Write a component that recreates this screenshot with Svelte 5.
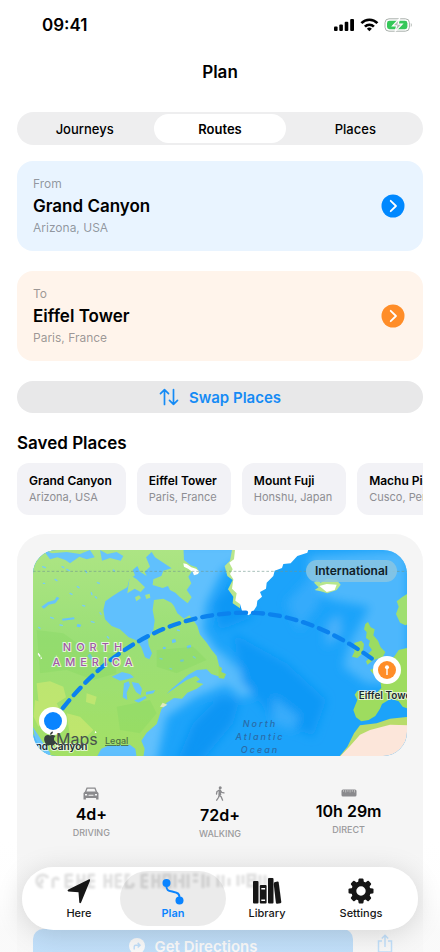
<script lang="ts">
  interface Place {
    name: string;
    region: string;
  }

  const segments = ['Journeys', 'Routes', 'Places'];
  const tabs = ['Here', 'Plan', 'Library', 'Settings'];

  const saved: Place[] = [
    { name: 'Grand Canyon', region: 'Arizona, USA' },
    { name: 'Eiffel Tower', region: 'Paris, France' },
    { name: 'Mount Fuji', region: 'Honshu, Japan' },
    { name: 'Machu Picchu', region: 'Cusco, Peru' }
  ];

  const stats = [
    { icon: 'car', value: '4d+', label: 'DRIVING' },
    { icon: 'walk', value: '72d+', label: 'WALKING' },
    { icon: 'ruler', value: '10h 29m', label: 'DIRECT' }
  ];

  let segment = $state('Routes');
  let tab = $state('Plan');
  let from = $state(saved[0]);
  let to = $state(saved[1]);

  function swap() {
    [from, to] = [to, from];
  }
</script>

{#snippet chevron()}
  <svg class="chevron" viewBox="0 0 24 24" aria-hidden="true">
    <circle cx="12" cy="12" r="11.5" fill="currentColor" />
    <path d="M9.7 6.8 15 12l-5.3 5.2" fill="none" stroke="#fff" stroke-width="1.8" stroke-linecap="round" stroke-linejoin="round" />
  </svg>
{/snippet}

<div class="screen">
  <main>
    <div class="status">
      <span class="time">09:41</span>
      <svg width="80" height="16" viewBox="0 0 80 16" aria-hidden="true">
        <rect x="0" y="9.5" width="3.6" height="4.5" rx="1" />
        <rect x="5.3" y="7.5" width="3.6" height="6.5" rx="1" />
        <rect x="10.7" y="4.8" width="3.6" height="9.2" rx="1" />
        <rect x="16.2" y="2" width="3.8" height="12" rx="1" />
        <g fill="none" stroke="#000" stroke-width="2.6">
          <path d="M27.4 6.2a11 11 0 0 1 16 0" />
          <path d="M30.9 9.6a6.3 6.3 0 0 1 9 0" />
        </g>
        <path d="M35.4 14.2 32.9 11.7a3.6 3.6 0 0 1 5 0z" />
        <rect x="51" y="1.8" width="24.4" height="12.4" rx="4" fill="#fff" stroke="#a9b0ab" />
        <rect x="53" y="3.8" width="20.4" height="8.4" rx="2.4" fill="#35c759" />
        <path d="M76.8 6v4c1.3-.5 1.3-3.5 0-4z" fill="#a9b0ab" />
        <path d="m65.6 1.500-7 7.300h4.100l-1.700 5.900 7.200-7.500h-4.100z" fill="#b4bbb6" stroke="#fff" stroke-width="1.2" />
      </svg>
    </div>

    <h1>Plan</h1>

    <div class="segments" role="group" aria-label="Plan section">
      {#each segments as name}
        <button type="button" class:active={segment === name} aria-pressed={segment === name} onclick={() => (segment = name)}>
          {name}
        </button>
      {/each}
    </div>

    <div class="stack">
      <button type="button" class="place from">
        <span class="place-text">
          <span class="hint">From</span>
          <span class="name">{from.name}</span>
          <span class="hint">{from.region}</span>
        </span>
        {@render chevron()}
      </button>

      <button type="button" class="place to">
        <span class="place-text">
          <span class="hint">To</span>
          <span class="name">{to.name}</span>
          <span class="hint">{to.region}</span>
        </span>
        {@render chevron()}
      </button>

      <button type="button" class="swap" onclick={swap}>
        <svg width="20" height="18" viewBox="0 0 20 18" aria-hidden="true">
          <path d="M5.5 16.5V1.700M1.500 5.700l4-4 4 4M14.500 1.500v14.800M10.500 12.300l4 4 4-4" />
        </svg>
        Swap Places
      </button>
    </div>

    <h2>Saved Places</h2>
    <div class="chips">
      {#each saved as place}
        <button type="button" class="chip">
          <strong>{place.name}</strong>
          <span>{place.region}</span>
        </button>
      {/each}
    </div>

    <section class="route">
      <div class="map">
        <svg viewBox="0 0 374 206" preserveAspectRatio="xMidYMid slice" role="img" aria-label="Route map">
          <defs>
            <filter id="soft" x="-20%" y="-20%" width="140%" height="140%"><feGaussianBlur stdDeviation="14" /></filter>
            <filter id="shore"><feGaussianBlur stdDeviation="1.5" /></filter>
            <linearGradient id="land" x1="0" y1="0" x2="0" y2="1">
              <stop offset="0" stop-color="#ade584" />
              <stop offset="0.45" stop-color="#9bdf76" />
              <stop offset="1" stop-color="#a3e065" />
            </linearGradient>
          </defs>

          <!-- terrain is drawn on a grid three times finer than the labels -->
          <svg width="374" height="206" viewBox="0 0 1122 618">
            <rect width="1122" height="618" fill="#1ca3fa" />
            <g filter="url(#soft)">
              <path d="M440-20H640V20L570 60 520 160 510 240 570 330 640 390 670 430 620 440 590 400 490 440 400 500 370 640H0V-20z" fill="#60c0fd" />
              <path d="M830 20 1122 0 1122 400 1000 400 930 350 950 280 1010 170 900 150 830 120z" fill="#4db7fc" />
              <path d="M560 300 610 350 655 390 620 430 560 400z" fill="#58bcfc" />
              <path d="M600 250 760 340 880 450 840 560 720 500 630 400z" fill="#0c98f6" />
              <path d="M560 440 620 450 600 520 500 640 430 640 480 520z" fill="#0d95f4" />
              <path d="M600 100 660 200 560 240 540 160z" fill="#1097f5" />
              <path d="M880 220 920 190 930 250 880 290z" fill="#48b0fa" />
              <path d="M720 440 800 500 780 540 720 520z" fill="#39acfb" />
              <path d="M850 60 760 160 800 240 860 160z" fill="#35abfb" />
            </g>

            <g filter="url(#shore)">
              <g transform="translate(-39 -30)">
                <path d="M30 20H490L492 60 512 76 530 82 538 98 526 104 516 94 505 110 514 130 500 150 515 172 503 190 480 172 466 158 450 150 444 138 428 144 398 135 400 118 424 108 430 92 455 85 430 68 405 52 395 36 378 52 390 80 374 95 380 108 360 95 352 78 338 90 345 106 328 118 322 142 298 155 278 168 256 184 250 210 255 238 275 258 300 268 326 292 352 302 364 322 375 352 388 358 396 340 386 316 384 298 400 270 404 242 398 210 402 180 430 176 454 188 462 198 472 220 492 236 508 226 518 238 532 258 540 284 560 308 575 330 590 348 598 380 600 410 574 402 560 388 530 390 505 404 482 424 455 446 440 462 470 440 500 420 528 408 540 418 528 426 550 432 530 446 502 458 486 476 462 474 440 488 424 508 416 534 410 552 380 578 364 602 374 626 370 652 350 652 346 626 330 614 300 616 270 614 244 626 230 652H74L52 600 30 570z" fill="url(#land)" />
                <path d="M420 500 428 488 442 494 430 502z" fill="#dfe9c0" />
                <path d="M330 105 350 118 375 142 362 156 344 146 322 160z" fill="#a9e382" />
                <path d="M345 172l12-6 6 8-14 10zM375 165l14-4 2 12-12 4z" fill="#a9e382" />
                <g fill="#68c4fb">
                  <path d="M70 30 96 40 140 36 180 42 210 30 224 52 200 58 178 50 150 70 136 60 112 52 90 58z" />
                  <path d="M240 30 262 42 290 36 310 48 302 62 270 54 246 62z" />
                  <path d="M64 200 84 186 104 180 110 170 118 174 106 190 86 194 72 206z" />
                  <path d="M275 410 306 396 330 402 342 412 322 418 300 422z" />
                  <path d="M312 430 326 424 330 436 320 458 322 480 308 472z" />
                  <path d="M335 426 356 430 366 446 362 466 348 456 340 440z" />
                  <path d="M342 482 376 468 380 474 356 488zM378 456l28-6-6 10-22 4z" />
                  <path d="M38 560 54 584 70 610 92 640 84 652 64 628 46 596z" />
                  <path d="M126 236l36-4 2 6-36 4zM172 252l12 2-4 8-10-2zM210 340l10 14-8 6-10-12zM188 310l8 2-2 8-8-4z" />
                  <path d="M455 300l10-4 4 10-12 4zM500 318l12-4 2 8-12 4zM430 320l8 2-2 6-8-2zM480 360l10-2 2 6-10 2z" />
                </g>
                <g fill="none" stroke="#78cdf5" stroke-width="4" stroke-linecap="round">
                  <path d="M70 130h4M105 118l6 4M140 88l8 4M172 140l5 3M196 92l4 6M232 128l6 2M214 158l2 6M150 160l6 3M92 232l8 3M188 196l6 2M226 170l4 4M120 255l7 1M56 262l4 3M214 245l8 2M262 290l4 4M240 218l3 5M472 270l6 2M420 355l6 2M520 350l6 4M450 385l5 2M126 80l5 3M280 90l4 4M68 80l8 3" />
                </g>
                <g fill="#d3ea72" opacity="0.6">
                  <path d="M50 430 90 424 130 440 138 472 110 490 130 530 100 560 60 530z" />
                  <path d="M140 520 180 530 220 570 190 600 150 590zM200 460l30 10-6 24-26-8z" />
                  <path d="M45 480l26 10 4 50-20 20-14-30z" />
                </g>
                <g fill="#82d75f" opacity="0.3">
                  <path d="M50 270 130 280 200 330 280 340 290 400 220 420 140 390 60 400z" />
                  <path d="M290 500 390 480 410 520 360 580 300 570z" />
                  <path d="M410 330 520 320 560 360 470 400 410 380z" />
                </g>
                <g fill="#fff">
                  <path d="M490 70l10 2 14 10 14 4 10 8-4 8-12 4-4-10-14-10-12-6z" />
                  <path d="M55 338l6 8-2 6-6-10zM62 346l4 10-4 2zM226 572l4 6-6 2z" />
                </g>
              </g>

              <g transform="translate(561 -30)">
                <path d="M38 20H60L50 100 60 150 60 205 38 190 40 170 24 148 38 120 22 108 14 78 30 62z" fill="#b9e58c" />
                <path d="M46 20H268L262 38 232 48 212 70 190 72 186 84 164 92 160 108 140 128 138 146 120 156 126 170 112 182 110 198 100 214 86 226 66 212 60 192 46 182 50 160 36 146 40 118 30 102 38 88 28 68 42 58z" fill="#fff" />
                <path d="M282 128 292 120 302 128 322 116 350 120 362 134 350 150 322 160 302 154 284 150 296 142z" fill="#b7e68d" />
                <path d="M298 138 320 132 350 134 344 150 320 156z" fill="#fff" />
                <path d="M436 252 444 246 452 262 464 268 460 286 474 302 482 322 496 336 488 352 460 360 442 374 438 364 452 352 444 342 456 330 446 316 450 302 438 294 440 276 432 268z" fill="#9bdc62" />
                <path d="M404 308 424 302 432 312 428 340 412 354 396 350 404 334 398 322z" fill="#9bdc62" />
                <path d="M570 156 548 170 530 184 536 200 528 222 540 248 556 256 570 250z" fill="#9fdf70" />
                <path d="M570 322 536 330 524 348 508 362 484 376 450 390 458 400 480 414 484 444 470 458 412 452 404 464 412 480 400 510 408 532 424 544 446 540 466 528 480 506 486 492 512 476 536 484 548 500 570 508z" fill="#9edc5f" />
                <path d="M350 660 382 620 402 580 420 556 470 550 510 536 570 530V660z" fill="#b8dc6a" />
                <path d="M350 660 390 618 420 584 450 570 510 554 570 556V660z" fill="#fce6da" />
                <path d="M-4 378 6 384 4 396 18 402 12 416-4 414z" fill="#9edc5f" />
              </g>
            </g>

            <path d="M0 64H1122" stroke="#70988d" stroke-width="3" stroke-dasharray="8 6" opacity="0.6" />
            <path d="M59 515C180 345 370 188 640 188 790 188 930 255 1061 360" fill="none" stroke="#0b82ee" stroke-width="13" stroke-linecap="round" stroke-dasharray="30 21" />
          </svg>

          <g class="continent">
            <text x="62" y="101">NORTH</text>
            <text x="62" y="116">AMERICA</text>
          </g>
          <g class="ocean">
            <text x="227" y="177">North</text>
            <text x="227" y="190">Atlantic</text>
            <text x="227" y="203">Ocean</text>
          </g>

          <circle cx="20" cy="171" r="14" fill="#fff" />
          <circle cx="20" cy="171" r="9" fill="#0a84ff" />
          <text class="pin-label" x="20" y="200" text-anchor="middle">Grand Canyon</text>

          <circle cx="354" cy="120" r="14" fill="#fff" />
          <circle cx="354" cy="120" r="9" fill="#ff8d28" />
          <path d="M353.300 118h1.400v7h-1.400z" fill="#fff" />
          <circle cx="354" cy="117.200" r="2" fill="#fff" />
          <text class="pin-label" x="354" y="149" text-anchor="middle">Eiffel Tower</text>

          <svg x="11" y="181" width="12" height="15" viewBox="0 20 384 470">
            <path fill="#36413f" d="M318.700 268.700c-.2-36.700 16.400-64.400 50-84.800-18.800-26.900-47.200-41.700-84.700-44.600-35.500-2.800-74.300 20.700-88.500 20.700-15 0-49.400-19.700-76.400-19.700C63.300 141.200 4 184.800 4 273.500q0 39.300 14.400 81.200c12.800 36.700 59 126.700 107.200 125.200 25.200-.6 43-17.900 75.800-17.900 31.800 0 48.300 17.900 76.400 17.900 48.600-.7 90.400-82.500 102.600-119.300-65.200-30.700-61.700-90-61.700-91.900zm-56.600-164.200c27.300-32.400 24.800-61.900 24-72.500-24.100 1.400-52 16.400-67.900 34.900-17.500 19.800-27.800 44.300-25.600 71.900 26.100 2 49.900-11.400 69.500-34.300z" />
          </svg>
          <text class="brand" x="23" y="195">Maps</text>
          <a href="#legal"><text class="legal" x="72" y="194">Legal</text></a>
        </svg>
        <span class="badge">International</span>
      </div>

      <div class="stats">
        {#each stats as stat}
          <div class="stat">
            {#if stat.icon === 'car'}
              <svg width="16" height="13" viewBox="0 0 16 13" aria-hidden="true">
                <path fill-rule="evenodd" d="M3.600.5h8.800l1.600 4 1.500 1.500v6.500h-2.400v-1.600H2.900v1.600H.5V6L2 4.500zM4.500 1.700 3.400 4.500h9.200l-1.100-2.800zM2 7v1.600h2.400L3.900 7zm10.100 0-.5 1.600H14V7zM5.500 7.800v1h5v-1z" />
              </svg>
            {:else if stat.icon === 'walk'}
              <svg width="10" height="15" viewBox="0 0 10 15" aria-hidden="true">
                <circle cx="5.200" cy="1.700" r="1.500" />
                <path d="M4.600 4 4.300 9l2 2 1.300 3.200M4.300 8.800 3.500 11.500 1.700 14.200M4.500 4.200 2 5.500 1.500 8M5.200 4.200 6.700 6.400 9 6.900" fill="none" stroke="currentColor" stroke-width="1.300" stroke-linecap="round" stroke-linejoin="round" />
                <path d="M3.800 3.800h1.900l.6 5.200H3.500z" />
              </svg>
            {:else}
              <svg width="16" height="8" viewBox="0 0 16 8" aria-hidden="true">
                <rect x="0.500" y="0.500" width="15" height="7" rx="1.500" />
                <path d="M2.500 1v1.800M4.700 1v2.500M6.900 1v1.800M9.100 1v2.500M11.300 1v1.800M13.500 1v2.500" stroke="#d3d3d3" stroke-width="0.700" />
              </svg>
            {/if}
            <strong>{stat.value}</strong>
            <small>{stat.label}</small>
          </div>
        {/each}
      </div>

      <div class="actions">
        <button type="button" class="directions">
          <svg width="16" height="16" viewBox="0 0 16 16" aria-hidden="true">
            <circle cx="8" cy="8" r="8" fill="#fff" />
            <path d="M5.200 11.500V8.700q0-1.500 1.500-1.500h4M8.700 4.900l2.300 2.300-2.300 2.300" fill="none" stroke="#0088ff" stroke-width="1.500" />
          </svg>
          Get Directions
        </button>
        <button type="button" class="share" aria-label="Share">
          <svg width="16" height="20" viewBox="0 0 16 20" aria-hidden="true">
            <path d="M5 7H1.500v11h13V7H11M8 13V1.500M4.800 4.500 8 1.300l3.200 3.200" />
          </svg>
        </button>
      </div>
    </section>
  </main>

  <div class="fade"></div>

  <nav>
    <svg class="reflection" width="250" height="22" viewBox="0 0 250 22" aria-hidden="true">
      <path d="M19 17a6 6 0 1 1 5-9M15 13a2 2 0 1 0 2-4M29 18v-8q3-4 6 0M42 4v14M42 5h7M42 11h7M42 17h7M54 4v14M54 11h6M60 4v14M65 4v14M65 5h6M65 11h6M65 17h6M81 4v14M81 11h6M87 4v14M92 4v14M92 5h6M92 11h6M92 17h6" />
      <path d="M106 5h-4v12h7M109 17v-4M118 4v14M118 5h6M118 11h6M118 17h6M129 4v14M129 11h6M135 4v14M140 5h6v12h-6zM151 4v14M154 11h4M159 4v14M164 4v14M169 5h5M169 11h5M179 4v14M184 6v11M194 5v12M199 5v12M205 8v8M214 16V5M219 5v9M224 5h7v11h-7zM224 10h7M236 5v11M241 5v11M246 8v6" />
    </svg>
    {#each tabs as name}
      <button type="button" class="tab" class:active={tab === name} aria-current={tab === name ? 'page' : undefined} onclick={() => (tab = name)}>
        <svg width="30" height="28" viewBox="0 0 30 28" aria-hidden="true">
          {#if name === 'Here'}
            <path d="M26 3.800 17.200 25.200q-.9 1.700-1.900.4L14.500 15.300 4.300 14.400q-1.700-.8.100-1.900L24.600 2.500q1.900-.6 1.400 1.300z" fill="currentColor" />
          {:else if name === 'Plan'}
            <g transform="translate(0 1)">
              <circle cx="8.500" cy="5" r="4" fill="currentColor" />
              <circle cx="21.500" cy="22.500" r="4" fill="currentColor" />
              <path d="M8.500 7c-.5 5.500 2 5.700 6.500 6.700s7 1.800 6.500 7" fill="none" stroke="currentColor" stroke-width="2" />
            </g>
          {:else if name === 'Library'}
            <g fill="currentColor">
              <rect x="1" y="4" width="5.500" height="22.500" rx="1" />
              <path fill-rule="evenodd" d="M8.800 8h4.800q1 0 1 1v16.500q0 1-1 1H8.800q-1 0-1-1V9q0-1 1-1zM9.300 11v1.500h3.800V11zM9.300 22.500V24h3.800v-1.500z" />
              <rect x="16" y="1" width="5.500" height="25.500" rx="1" />
              <path d="m22.300 5.300 3.200-.7q1-.1 1.200.9L29.300 25q.1 1-.9 1.200l-3.300.5q-1 .1-1.200-.9L21.700 7z" />
            </g>
          {:else}
            <g transform="translate(15 14)" fill="currentColor">
              <circle r="7.200" fill="none" stroke="currentColor" stroke-width="5" />
              {#each [0, 45, 90, 135, 180, 225, 270, 315] as angle}
                <path d="M-3-8-2.500-11.500q.2-1 1-1h3q.8 0 1 1L3-8z" transform="rotate({angle})" />
              {/each}
            </g>
          {/if}
        </svg>
        {name}
      </button>
    {/each}
  </nav>
</div>

<style>
  :global(body) {
    margin: 0;
    background: #fff;
    color: #000;
    font-family: Inter, 'Noto Sans', sans-serif;
  }

  .screen {
    position: relative;
    height: 100vh;
    overflow: hidden;
  }

  main {
    box-sizing: border-box;
    height: 100%;
    overflow-y: auto;
    padding: 0 17px;
    scrollbar-width: none;
  }

  button {
    margin: 0;
    border: none;
    padding: 0;
    background: none;
    color: inherit;
    font: inherit;
    cursor: pointer;
  }

  .status {
    display: flex;
    align-items: center;
    justify-content: space-between;
    height: 50px;
    padding: 0 9px 0 25px;
  }

  .time {
    font-size: 17px;
    font-weight: 600;
  }

  h1 {
    margin: 0 0 28px;
    padding-top: 10px;
    font-size: 17px;
    font-weight: 600;
    line-height: 24px;
    text-align: center;
  }

  .segments {
    display: grid;
    grid-template-columns: repeat(3, 1fr);
    box-sizing: border-box;
    height: 33px;
    margin-bottom: 16px;
    border-radius: 17px;
    padding: 2px 0;
    background: #eeeeef;
    font-size: 13px;
    font-weight: 500;
  }

  .segments button {
    margin: 0 2px;
    border-radius: 15px;
  }

  .segments .active {
    background: #fff;
    font-weight: 600;
  }

  .stack {
    display: flex;
    flex-direction: column;
    gap: 20px;
  }

  .place {
    display: flex;
    align-items: center;
    justify-content: space-between;
    border-radius: 16px;
    padding: 12px 18px 12px 16px;
    text-align: left;
  }

  .place.from {
    background: #e9f4ff;
    color: #0088ff;
  }

  .place.to {
    background: #fff4eb;
    color: #ff8d28;
  }

  .place-text {
    display: flex;
    flex-direction: column;
    line-height: 22px;
  }

  .hint {
    color: rgb(60 60 67 / 0.52);
    font-size: 12px;
  }

  .name {
    color: #000;
    font-size: 17px;
    font-weight: 600;
  }

  .chevron {
    width: 24px;
    height: 24px;
  }

  .swap {
    display: flex;
    align-items: center;
    justify-content: center;
    gap: 10px;
    height: 32px;
    border-radius: 16px;
    background: #e8e8e9;
    color: #158bf5;
    font-size: 15px;
    font-weight: 600;
  }

  .swap svg {
    fill: none;
    stroke: currentColor;
    stroke-width: 1.7;
    stroke-linecap: round;
    stroke-linejoin: round;
  }

  h2 {
    margin: 18px 0 8px;
    font-size: 17px;
    font-weight: 600;
    line-height: 24px;
  }

  .chips {
    display: flex;
    gap: 11px;
    overflow-x: auto;
    scrollbar-width: none;
  }

  .chip {
    display: flex;
    flex: none;
    flex-direction: column;
    border-radius: 12px;
    padding: 9px 14px 9px 12px;
    background: #f2f2f6;
    font-size: 12px;
    line-height: 17px;
    text-align: left;
  }

  .chip strong {
    font-weight: 600;
  }

  .chip span {
    color: #8e8e93;
    font-size: 11px;
  }

  .route {
    margin-top: 19px;
    border-radius: 28px;
    padding: 16px;
    background: #f5f5f5;
  }

  .map {
    position: relative;
    overflow: hidden;
    aspect-ratio: 374 / 206;
    border-radius: 24px;
  }

  .map > svg {
    display: block;
    width: 100%;
    height: 100%;
  }

  .continent text {
    fill: #a05aa5;
    stroke: #ffffffc0;
    stroke-width: 2px;
    paint-order: stroke;
    font-size: 11px;
    font-weight: 500;
    letter-spacing: 5px;
    text-anchor: middle;
  }

  .ocean text {
    fill: #2a6ba8;
    font-size: 9px;
    font-style: italic;
    font-weight: 500;
    letter-spacing: 2px;
    text-anchor: middle;
  }

  .pin-label {
    fill: #1c2a30;
    stroke: #ffffffb0;
    stroke-width: 2px;
    paint-order: stroke;
    font-size: 10px;
    font-weight: 600;
  }

  .brand {
    fill: #48524d;
    font-size: 16px;
    font-weight: 400;
  }

  .legal {
    fill: #4c7046;
    font-size: 9px;
    font-weight: 500;
    text-decoration: underline;
  }

  .badge {
    position: absolute;
    top: 10px;
    right: 10px;
    border-radius: 11px;
    padding: 0 9px;
    background: rgb(137 197 226 / 0.85);
    color: #102028;
    font-size: 12px;
    font-weight: 600;
    line-height: 22px;
  }

  .stats {
    display: grid;
    grid-template-columns: repeat(3, 1fr);
    gap: 12px;
    align-items: center;
    height: 76px;
    margin-top: 18px;
  }

  .stat {
    display: flex;
    flex-direction: column;
    align-items: center;
  }

  .stat svg {
    color: #8a8a8d;
    fill: currentColor;
  }

  .stat strong {
    margin: 4px 0;
    font-size: 16px;
    font-weight: 600;
    line-height: 20px;
  }

  .stat small {
    color: #9a9a9c;
    font-size: 9px;
    font-weight: 500;
    line-height: 10px;
  }

  .actions {
    display: flex;
    gap: 10px;
    margin-top: 79px;
  }

  .directions {
    display: flex;
    flex: 1;
    align-items: center;
    justify-content: center;
    gap: 10px;
    height: 34px;
    border-radius: 10px;
    background: #0088ff;
    color: #fff;
    font-size: 15px;
    font-weight: 600;
  }

  .share {
    width: 44px;
    color: #0088ff;
  }

  .share svg {
    fill: none;
    stroke: currentColor;
    stroke-width: 1.5;
  }

  .fade {
    position: absolute;
    inset: auto 0 0;
    height: 112px;
    background: linear-gradient(rgb(255 255 255 / 0), rgb(250 250 250 / 0.2) 50%, rgb(248 248 248 / 0.78) 80%);
    pointer-events: none;
  }

  nav {
    position: absolute;
    inset: auto 22px 22px;
    display: grid;
    grid-template-columns: repeat(4, 1fr);
    box-sizing: border-box;
    height: 63px;
    border-radius: 32px;
    padding: 4px 10px;
    background: rgb(255 255 255 / 0.96);
    box-shadow: 0 4px 28px rgb(0 0 0 / 0.14);
  }

  .reflection {
    position: absolute;
    top: 3px;
    left: 2px;
    fill: none;
    stroke: #000;
    stroke-width: 3;
    opacity: 0.12;
    filter: blur(1px);
  }

  .tab {
    position: relative;
    display: flex;
    flex-direction: column;
    align-items: center;
    justify-content: center;
    gap: 1px;
    margin: 0 -6px;
    border-radius: 28px;
    color: #161616;
    font-size: 11px;
    font-weight: 500;
    line-height: 15px;
  }

  .tab.active {
    background: rgb(0 0 0 / 0.08);
    color: #0a84ff;
    font-weight: 600;
  }
</style>
